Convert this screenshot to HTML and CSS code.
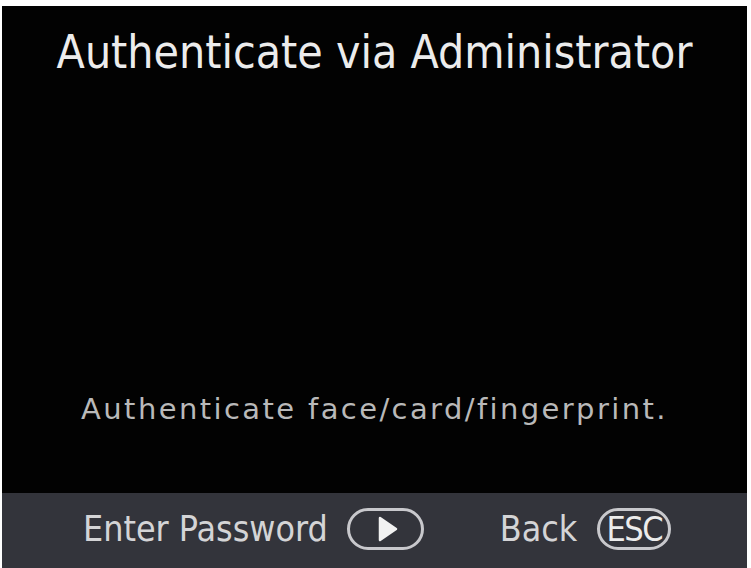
FILE: index.html
```html
<!DOCTYPE html>
<html lang="en">
<head>
    <meta charset="UTF-8">
    <title>Authenticate via Administrator</title>
    <link rel="stylesheet" href="styles.css">
</head>
<body>
    <div class="screen">
        <h1 class="title">Authenticate via Administrator</h1>
        <p class="hint">Authenticate face/card/fingerprint.</p>
        <div class="keybar">
            <div class="key">
                <span class="key-label">Enter Password</span>
                <span class="key-pill">
                    <svg width="22" height="28" viewBox="0 0 22 28">
                        <path d="M3 3 L19 14 L3 25 Z" fill="#f2f2f2" stroke="#f2f2f2" stroke-width="2.5" stroke-linejoin="round"/>
                    </svg>
                </span>
            </div>
            <div class="key">
                <span class="key-label">Back</span>
                <span class="key-pill esc">ESC</span>
            </div>
        </div>
    </div>
</body>
</html>
```

FILE: styles.css
```css
* {
    margin: 0;
    padding: 0;
    box-sizing: border-box;
}

body {
    background: #fff;
    font-family: 'DejaVu Sans', sans-serif;
    font-stretch: condensed;
    padding: 6px 4px 0 2px;
    height: 568px;
    overflow: hidden;
}

.screen {
    background: #020202;
    height: 562px;
    display: flex;
    flex-direction: column;
}

.title {
    color: #ececec;
    font-size: 46px;
    font-weight: normal;
    text-align: center;
    margin-top: 20px;
    line-height: 52px;
}

.hint {
    color: #b9b9b9;
    font-size: 29px;
    font-stretch: normal;
    letter-spacing: 2.4px;
    text-align: center;
    margin-top: auto;
    margin-bottom: 67px;
    line-height: 34px;
}

.keybar {
    background: #33343b;
    height: 75px;
    display: flex;
    align-items: center;
    padding: 0 0 4px 81px;
}

.key {
    display: flex;
    align-items: center;
    gap: 19px;
    margin-right: 76px;
    flex-shrink: 0;
}

.key + .key {
    gap: 20px;
}

.key-label {
    color: #d4d4d6;
    font-size: 35.5px;
    white-space: nowrap;
}

.key-pill {
    width: 77px;
    height: 42px;
    border: 3px solid #c8c8cc;
    border-radius: 21px;
    display: flex;
    align-items: center;
    justify-content: center;
    flex-shrink: 0;
}

.key-pill svg {
    margin-left: 6px;
}

.key-pill.esc {
    width: 74px;
    color: #ececec;
    font-size: 34px;
    letter-spacing: -1.5px;
}
```
